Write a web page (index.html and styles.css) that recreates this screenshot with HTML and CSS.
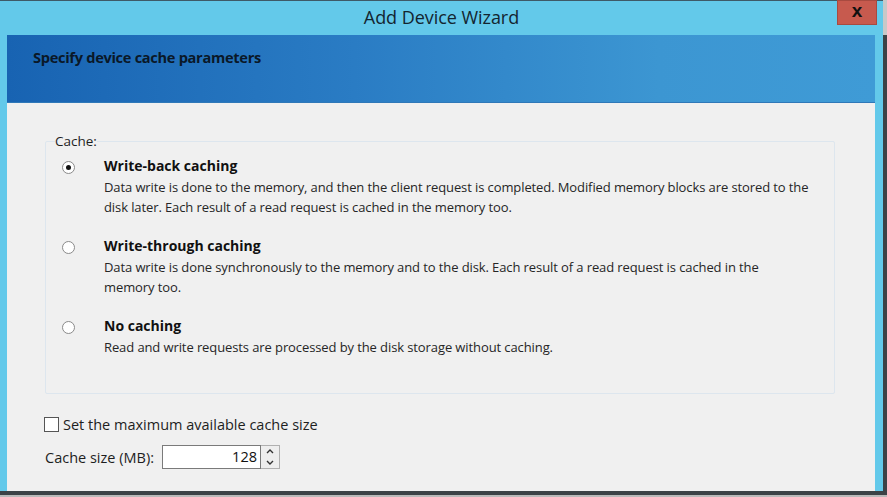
FILE: index.html
```html
<!DOCTYPE html>
<html>
<head>
<meta charset="utf-8">
<link rel="stylesheet" href="styles.css">
</head>
<body>
<div class="window">
  <div class="titlebar">
    <div class="title">Add Device Wizard</div>
    <div class="close">x</div>
  </div>
  <div class="frame">
    <div class="client">
      <div class="banner">Specify device cache parameters</div>
      <div class="content">
        <fieldset class="group">
          <legend>Cache:</legend>
          <div class="option">
            <span class="radio checked"></span>
            <div class="opt-text">
              <div class="opt-title">Write-back caching</div>
              <div class="opt-desc">Data write is done to the memory, and then the client request is completed. Modified memory blocks are stored to the disk later. Each result of a read request is cached in the memory too.</div>
            </div>
          </div>
          <div class="option">
            <span class="radio"></span>
            <div class="opt-text">
              <div class="opt-title">Write-through caching</div>
              <div class="opt-desc">Data write is done synchronously to the memory and to the disk. Each result of a read request is cached in the memory too.</div>
            </div>
          </div>
          <div class="option">
            <span class="radio"></span>
            <div class="opt-text">
              <div class="opt-title">No caching</div>
              <div class="opt-desc">Read and write requests are processed by the disk storage without caching.</div>
            </div>
          </div>
        </fieldset>
        <div class="check-row">
          <span class="checkbox"></span>
          <span>Set the maximum available cache size</span>
        </div>
        <div class="size-row">
          <span>Cache size (MB):</span>
          <div class="spin">
            <div class="spin-input">128</div>
            <div class="spin-btns">
              <svg width="12" height="11" viewBox="0 0 12 11"><path d="M3 7 L6 4 L9 7" fill="none" stroke="#333" stroke-width="1.4"/></svg>
              <svg width="12" height="11" viewBox="0 0 12 11"><path d="M3 4 L6 7 L9 4" fill="none" stroke="#333" stroke-width="1.4"/></svg>
            </div>
          </div>
        </div>
      </div>
    </div>
    <div class="edge"></div>
  </div>
  <div class="bottom"></div>
</div>
</body>
</html>
```
FILE: styles.css
```css
html, body {
  margin: 0;
  padding: 0;
  background: #c8c8c8;
}
body {
  font-family: "Open Sans", "Noto Sans", "Liberation Sans", sans-serif;
  color: #222;
}
.window {
  width: 887px;
  height: 497px;
  display: flex;
  flex-direction: column;
  overflow: hidden;
}
.titlebar {
  height: 35px;
  background: #63c9ea;
  border-top: 1px solid #3e5a68;
  position: relative;
  display: flex;
  justify-content: center;
  box-sizing: border-box;
  margin-right: 4px;
}
.title {
  font-size: 18px;
  color: #132530;
  margin-top: 4px;
  letter-spacing: -0.05px;
}
.close {
  position: absolute;
  right: 6px;
  top: -1px;
  width: 40px;
  height: 25px;
  background: #c75a4e;
  border: 1px solid #a84a40;
  box-sizing: border-box;
  font-family: "Liberation Sans", sans-serif;
  font-weight: bold;
  font-size: 19px;
  color: #111;
  text-align: center;
  line-height: 19px;
}
.frame {
  flex: 1;
  display: flex;
  background: #63c9ea;
  padding-left: 7px;
}
.client {
  flex: 1;
  background: #f0f0f0;
  display: flex;
  flex-direction: column;
}
.edge {
  width: 8px;
  background: #63c9ea;
  border-right: 4px solid #3c4246;
}
.banner {
  height: 68px;
  background: linear-gradient(90deg, #1863b2 0%, #2a7cc4 40%, #3c96d2 75%, #3f9bd6 100%);
  border-bottom: 1px solid #2f78b8;
  box-sizing: border-box;
  padding: 12px 0 0 26px;
  font-weight: bold;
  font-size: 14.6px;
  color: #0a1828;
  letter-spacing: -0.3px;
}
.content {
  flex: 1;
  padding: 29px 0 0 38px;
  font-size: 13px;
}
.group {
  width: 790px;
  height: 262px;
  box-sizing: border-box;
  margin: 0;
  border: 1px solid #dde6ee;
  border-radius: 2px;
  padding: 6px 0 0 15px;
}
.group legend {
  padding: 0;
  margin-left: -6px;
  font-size: 13.5px;
  color: #1e1e1e;
}
.option {
  display: flex;
  height: 80px;
}
.radio {
  width: 13px;
  height: 13px;
  border: 1px solid #8a8a8a;
  border-radius: 50%;
  background: #fff;
  box-sizing: border-box;
  margin-top: 5px;
  margin-left: 1px;
  position: relative;
}
.radio.checked::after {
  content: "";
  position: absolute;
  left: 3px;
  top: 3px;
  width: 5px;
  height: 5px;
  border-radius: 50%;
  background: #111;
}
.opt-text {
  margin-left: 29px;
}
.opt-title {
  font-weight: bold;
  font-size: 14px;
  color: #111;
  line-height: 20px;
}
.opt-desc {
  margin-top: 1px;
  line-height: 20px;
  width: 705px;
  color: #262626;
  letter-spacing: -0.1px;
}
.check-row {
  display: flex;
  align-items: center;
  margin-top: 21px;
  margin-left: -1px;
  font-size: 14.5px;
  color: #1e1e1e;
}
.checkbox {
  width: 15px;
  height: 15px;
  border: 1px solid #555;
  background: #fff;
  box-sizing: border-box;
  margin-right: 4px;
}
.size-row {
  display: flex;
  align-items: center;
  margin-top: 11px;
  font-size: 14.5px;
  color: #1e1e1e;
}
.spin {
  display: flex;
  margin-left: 8px;
  height: 24px;
}
.spin-input {
  width: 99px;
  border: 1px solid #7a7a7a;
  background: #fff;
  box-sizing: border-box;
  text-align: right;
  padding-right: 3px;
  line-height: 22px;
  font-size: 14.5px;
  color: #111;
}
.spin-btns {
  width: 19px;
  border: 1px solid #b0b0b0;
  border-left: none;
  background: #eee;
  display: flex;
  flex-direction: column;
  align-items: center;
  justify-content: center;
  box-sizing: border-box;
}
.bottom {
  height: 4px;
  background: #3c4246;
  border-bottom: 2px solid #b9b9b9;
}
```
